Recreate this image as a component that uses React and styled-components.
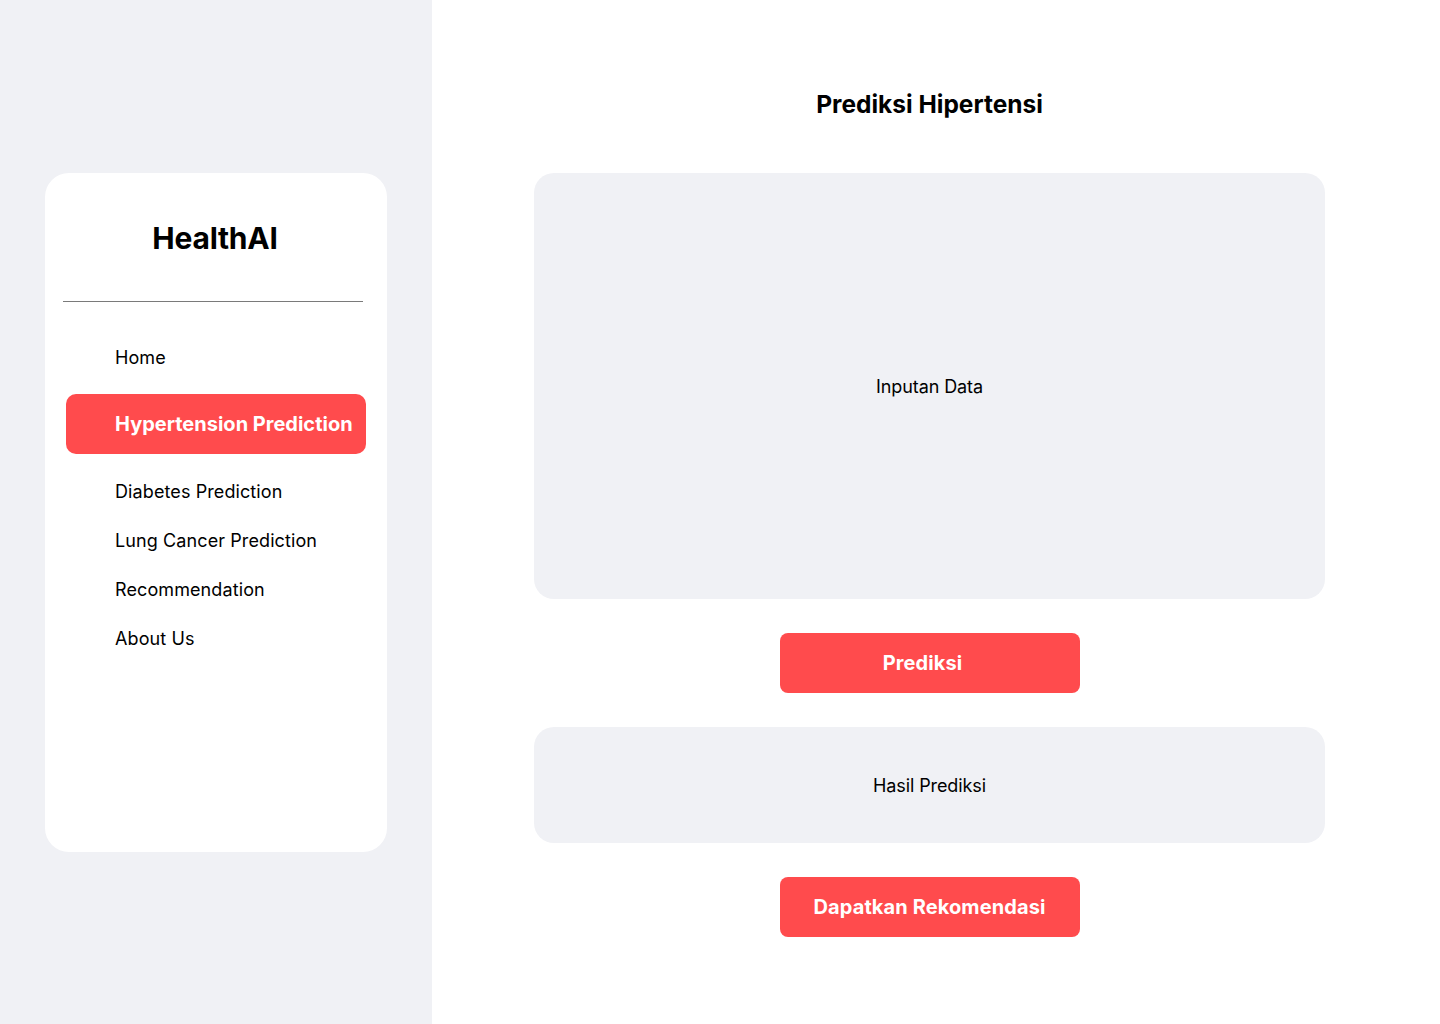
import React from 'react';
import styled, { createGlobalStyle } from 'styled-components';

const NAV_ITEMS = [
  { id: 0, label: 'Home' },
  { id: 1, label: 'Hypertension Prediction', active: true },
  { id: 2, label: 'Diabetes Prediction' },
  { id: 3, label: 'Lung Cancer Prediction' },
  { id: 4, label: 'Recommendation' },
  { id: 5, label: 'About Us' },
];

const App = () => {
  return (
    <>
      <GlobalStyle />
      <Page>
        <Sidebar>
          <Card>
            <Brand>HealthAI</Brand>
            <Divider />
            <Nav>
              {NAV_ITEMS.map((item) => (
                <NavItem key={item.id} $active={item.active}>
                  {item.label}
                </NavItem>
              ))}
            </Nav>
          </Card>
        </Sidebar>
        <Main>
          <Title>Prediksi Hipertensi</Title>
          <Panel $height={426}>Inputan Data</Panel>
          <Button $shift={14}>Prediksi</Button>
          <Panel $height={116}>Hasil Prediksi</Panel>
          <Button>Dapatkan Rekomendasi</Button>
        </Main>
      </Page>
    </>
  );
};

export default App;

const GlobalStyle = createGlobalStyle`
  * {
    box-sizing: border-box;
  }
  body {
    margin: 0;
    font-family: Inter, 'Noto Sans', sans-serif;
    color: #000000;
    background: #ffffff;
  }
`;

const Page = styled.div`
  display: flex;
  width: 1440px;
  min-height: 1024px;
`;

const Sidebar = styled.aside`
  width: 432px;
  flex-shrink: 0;
  background: #f0f1f5;
  padding: 173px 0 0 45px;
`;

const Card = styled.div`
  width: 342px;
  height: 679px;
  background: #ffffff;
  border-radius: 24px;
  padding-top: 47px;
  display: flex;
  flex-direction: column;
`;

const Brand = styled.h1`
  margin: 0;
  font-size: 30px;
  line-height: 36px;
  font-weight: 700;
  letter-spacing: -0.2px;
  text-align: center;
  padding-right: 2px;
`;

const Divider = styled.hr`
  margin: 45px 24px 0 18px;
  border: none;
  border-top: 1.5px solid #7a7a7a;
  height: 0;
`;

const Nav = styled.nav`
  display: flex;
  flex-direction: column;
  gap: 25px;
  margin-top: 43px;
  padding-left: 21px;
`;

const NavItem = styled.div`
  width: 300px;
  height: ${({ $active }) => ($active ? '60px' : '24px')};
  display: flex;
  align-items: center;
  padding-left: 49px;
  font-size: ${({ $active }) => ($active ? '20px' : '18px')};
  font-weight: ${({ $active }) => ($active ? 700 : 400)};
  letter-spacing: ${({ $active }) => ($active ? '0' : '0.1px')};
  color: ${({ $active }) => ($active ? '#ffffff' : '#000000')};
  background: ${({ $active }) => ($active ? '#ff4b4d' : 'transparent')};
  border-radius: 10px;
  white-space: nowrap;
  cursor: pointer;
`;

const Main = styled.main`
  flex: 1;
  padding: 88px 115px 0 102px;
  display: flex;
  flex-direction: column;
  align-items: center;
`;

const Title = styled.h2`
  margin: 0 0 53px;
  font-size: 24.5px;
  line-height: 32px;
  font-weight: 700;
`;

const Panel = styled.section`
  width: 791px;
  height: ${({ $height }) => $height}px;
  background: #f0f1f5;
  border-radius: 20px;
  display: flex;
  align-items: center;
  justify-content: center;
  font-size: 18px;
  letter-spacing: -0.1px;
`;

const Button = styled.button`
  width: 300px;
  height: 60px;
  margin: 34px 0;
  padding: 0 ${({ $shift }) => $shift || 0}px 0 0;
  border: none;
  border-radius: 8px;
  background: #ff4b4d;
  color: #ffffff;
  font-family: inherit;
  font-size: 20px;
  font-weight: 700;
  letter-spacing: 0.1px;
  cursor: pointer;
`;
